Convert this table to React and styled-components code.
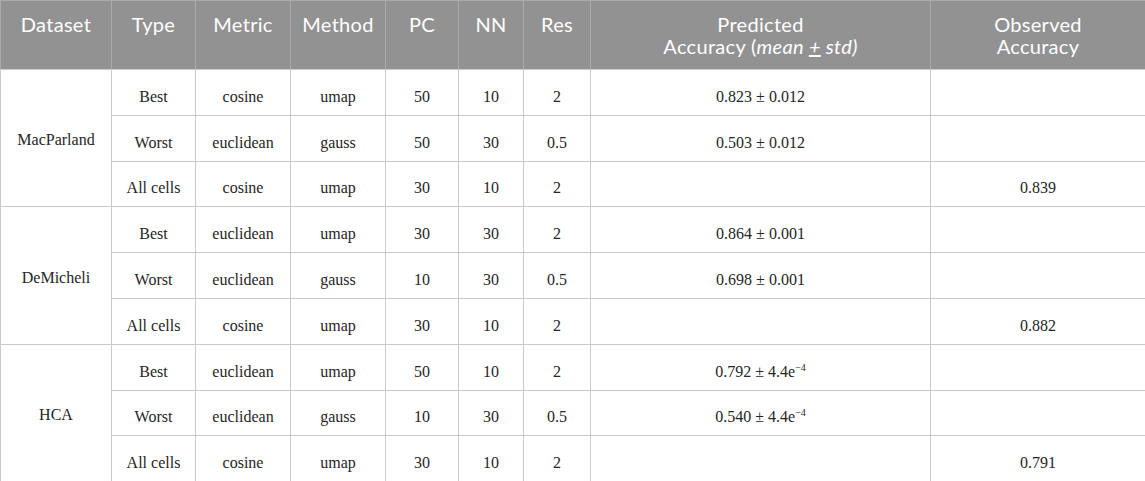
import React from "react";
import styled, { createGlobalStyle } from "styled-components";

const GlobalStyle = createGlobalStyle`
  html, body {
    margin: 0;
    padding: 0;
    background: #ffffff;
  }
`;

const Table = styled.table`
  width: 1145px;
  table-layout: fixed;
  border-collapse: collapse;
  font-family: "Liberation Serif", "DejaVu Serif", serif;
`;

const HeadCell = styled.th`
  width: ${(p) => p.$w}px;
  height: 69px;
  box-sizing: border-box;
  padding: 12px 6px 0;
  vertical-align: top;
  text-align: center;
  background: #929292;
  color: #ffffff;
  font-family: Lato, "Open Sans", sans-serif;
  font-weight: 400;
  font-size: 20px;
  letter-spacing: 0.3px;
  line-height: 22px;
  border: 1px solid #ababab;
  border-bottom: 1px solid #c9c9c9;

  & em {
    font-style: italic;
  }
`;

const Row = styled.tr`
  height: 45.8px;
`;

const Cell = styled.td`
  padding: ${(p) => (p.$group ? "4px" : "9px")} 6px 0;
  text-align: center;
  vertical-align: middle;
  color: #262626;
  font-size: 16px;
  line-height: 18px;
  border: 1px solid #cacaca;

  & sup {
    font-size: 10px;
    line-height: 0;
  }
`;

const columns = [
  { key: "dataset", w: 111, label: "Dataset" },
  { key: "type", w: 84, label: "Type" },
  { key: "metric", w: 95, label: "Metric" },
  { key: "method", w: 95, label: "Method" },
  { key: "pc", w: 73, label: "PC" },
  { key: "nn", w: 65, label: "NN" },
  { key: "res", w: 67, label: "Res" },
  {
    key: "pred",
    w: 340,
    label: (
      <>
        Predicted
        <br />
        Accuracy (
        <em>
          mean <u>+</u> std)
        </em>
      </>
    ),
  },
  {
    key: "obs",
    w: 215,
    label: (
      <>
        Observed
        <br />
        Accuracy
      </>
    ),
  },
];

const exp4 = (v) => (
  <>
    {v} ± 4.4e<sup>−4</sup>
  </>
);

const groups = [
  {
    name: "MacParland",
    rows: [
      ["Best", "cosine", "umap", "50", "10", "2", "0.823 ± 0.012", ""],
      ["Worst", "euclidean", "gauss", "50", "30", "0.5", "0.503 ± 0.012", ""],
      ["All cells", "cosine", "umap", "30", "10", "2", "", "0.839"],
    ],
  },
  {
    name: "DeMicheli",
    rows: [
      ["Best", "euclidean", "umap", "30", "30", "2", "0.864 ± 0.001", ""],
      ["Worst", "euclidean", "gauss", "10", "30", "0.5", "0.698 ± 0.001", ""],
      ["All cells", "cosine", "umap", "30", "10", "2", "", "0.882"],
    ],
  },
  {
    name: "HCA",
    rows: [
      ["Best", "euclidean", "umap", "50", "10", "2", exp4("0.792"), ""],
      ["Worst", "euclidean", "gauss", "10", "30", "0.5", exp4("0.540"), ""],
      ["All cells", "cosine", "umap", "30", "10", "2", "", "0.791"],
    ],
  },
];

const App = () => {
  return (
    <>
      <GlobalStyle />
      <Table>
        <thead>
          <tr>
            {columns.map((c) => (
              <HeadCell key={c.key} $w={c.w}>
                {c.label}
              </HeadCell>
            ))}
          </tr>
        </thead>
        <tbody>
          {groups.map((g) =>
            g.rows.map((r, i) => (
              <Row key={g.name + i}>
                {i === 0 && (
                  <Cell $group rowSpan={g.rows.length}>
                    {g.name}
                  </Cell>
                )}
                {r.map((v, j) => (
                  <Cell key={j}>{v}</Cell>
                ))}
              </Row>
            ))
          )}
        </tbody>
      </Table>
    </>
  );
};

export default App;
